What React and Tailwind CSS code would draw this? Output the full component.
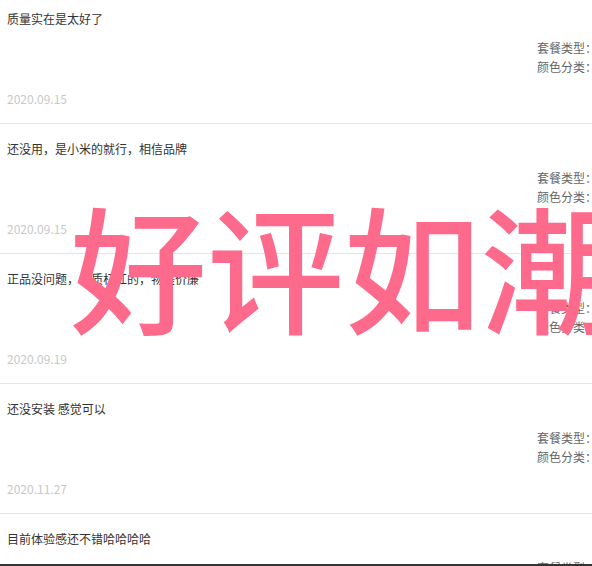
import React from 'react';

const reviews = [
  { text: '质量实在是太好了', date: '2020.09.15' },
  { text: '还没用，是小米的就行，相信品牌', date: '2020.09.15' },
  { text: '正品没问题，音质杠杠的，物美价廉', date: '2020.09.19' },
  { text: '还没安装 感觉可以', date: '2020.11.27' },
  { text: '目前体验感还不错哈哈哈哈', date: '' },
];

const font = { fontFamily: '"Microsoft YaHei", "Noto Sans CJK SC", sans-serif' };

function ReviewItem({ text, date, first }) {
  return (
    <div className={`border-b border-[#e5e5e5] h-[130px] pl-[7px] ${first ? 'mt-[-6px]' : ''}`}>
      <div className="pt-[16px] text-[12px] leading-[18px] text-[#333]">{text}</div>
      <div className="flex justify-end mt-[10px]">
        <div className="w-[55px] text-[12px] leading-[19px] text-[#666] whitespace-nowrap overflow-hidden">
          <div>套餐类型：</div>
          <div>颜色分类：</div>
        </div>
      </div>
      <div className="mt-[14px] text-[12px] leading-[18px] text-[#c8c8c8]">{date}</div>
    </div>
  );
}

export default function App() {
  return (
    <div className="relative w-[592px] h-[566px] overflow-hidden bg-white" style={font}>
      {reviews.map((r, i) => (
        <ReviewItem key={i} {...r} first={i === 0} />
      ))}
      <div className="absolute left-[70px] top-[196px] text-[137px] leading-[137px] font-medium text-[#fe6a8b] whitespace-nowrap">
        好评如潮
      </div>
      <div className="absolute left-0 right-0 bottom-0 h-[2px] bg-[#333]" />
    </div>
  );
}
